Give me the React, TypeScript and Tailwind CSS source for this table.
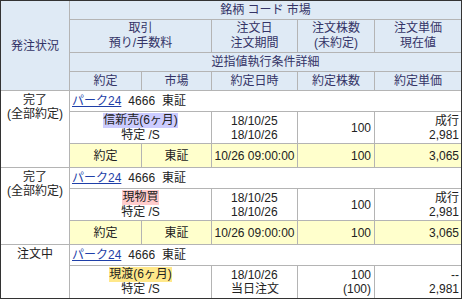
import React from "react";

const H = "bg-[#dfeaf5] text-[#333366] flex items-center justify-center text-center";
const W = "bg-white";
const Y = "bg-[#ffffcc]";

function Group({
  status,
  hl,
  hlColor,
  dates,
  qty,
  price,
  fill,
  last,
}: {
  status: React.ReactNode;
  hl: string;
  hlColor: string;
  dates: string[];
  qty: string[];
  price: string[];
  fill?: boolean;
  last?: boolean;
}) {
  return (
    <>
      <div className={`${W} ${last ? "row-span-2" : "row-span-3"} text-center pt-[2px] leading-[14px]`}>{status}</div>
      <div className={`${W} col-span-5 flex items-center pl-[2px]`}>
        <a href="#" className="text-[#1f3fa8] underline">パーク24</a>
        <span className="ml-[7px]">4666</span>
        <span className="ml-[7px]">東証</span>
      </div>
      <div className={`${W} col-span-2 flex flex-col items-center justify-center leading-[15px]`}>
        <span className={hlColor}>{hl}</span>
        <span>特定 /S</span>
      </div>
      <div className={`${W} flex flex-col justify-center pl-[19px] leading-[14px]`}>
        {dates.map((d, i) => (
          <span key={i}>{d}</span>
        ))}
      </div>
      <div className={`${W} flex flex-col justify-center items-end pr-[3px] leading-[14px]`}>
        {qty.map((d, i) => (
          <span key={i}>{d}</span>
        ))}
      </div>
      <div className={`${W} flex flex-col justify-center items-end pr-[2px] leading-[14px]`}>
        {price.map((d, i) => (
          <span key={i}>{d}</span>
        ))}
      </div>
      {fill && (
        <>
          <div className={`${Y} flex items-center justify-center`}>約定</div>
          <div className={`${Y} flex items-center justify-center`}>東証</div>
          <div className={`${Y} flex items-center justify-center`}>10/26 09:00:00</div>
          <div className={`${Y} flex items-center justify-end pr-[3px]`}>100</div>
          <div className={`${Y} flex items-center justify-end pr-[2px]`}>3,065</div>
        </>
      )}
    </>
  );
}

export default function App() {
  return (
    <div
      className="w-[462px] h-[299px] bg-white text-[12px] text-[#222]"
      style={{ fontFamily: '"Liberation Sans", "Noto Sans CJK JP", sans-serif' }}
    >
      <div className="grid grid-cols-[68px_71px_69px_85px_76px_86px] grid-rows-[18px_32px_18px_18px_20px_31px_23px_20px_31px_23px_20px_32px] gap-px bg-[#b4b4b4] border border-[#333] w-[462px]">
        <div className={`${H} row-span-4`}>発注状況</div>
        <div className={`${H} col-span-5`}>銘柄 コード 市場</div>
        <div className={`${H} col-span-2 flex-col leading-[15px]`}>
          <span>取引</span>
          <span>預り/手数料</span>
        </div>
        <div className={`${H} flex-col leading-[15px]`}>
          <span>注文日</span>
          <span>注文期間</span>
        </div>
        <div className={`${H} flex-col leading-[15px]`}>
          <span>注文株数</span>
          <span>(未約定)</span>
        </div>
        <div className={`${H} flex-col leading-[15px]`}>
          <span>注文単価</span>
          <span>現在値</span>
        </div>
        <div className={`${H} col-span-5`}>逆指値執行条件詳細</div>
        <div className={H}>約定</div>
        <div className={H}>市場</div>
        <div className={H}>約定日時</div>
        <div className={H}>約定株数</div>
        <div className={H}>約定単価</div>

        <Group
          status={
            <>
              完了
              <br />
              (全部約定)
            </>
          }
          hl="信新売(6ヶ月)"
          hlColor="bg-[#ccccff]"
          dates={["18/10/25", "18/10/26"]}
          qty={["100"]}
          price={["成行", "2,981"]}
          fill
        />
        <Group
          status={
            <>
              完了
              <br />
              (全部約定)
            </>
          }
          hl="現物買"
          hlColor="bg-[#ffcccc]"
          dates={["18/10/25", "18/10/26"]}
          qty={["100"]}
          price={["成行", "2,981"]}
          fill
        />
        <Group
          status={<>注文中</>}
          hl="現渡(6ヶ月)"
          hlColor="bg-[#ffe88a]"
          dates={["18/10/26", "当日注文"]}
          qty={["100", "(100)"]}
          price={["--", "2,981"]}
          last
        />
      </div>
    </div>
  );
}
